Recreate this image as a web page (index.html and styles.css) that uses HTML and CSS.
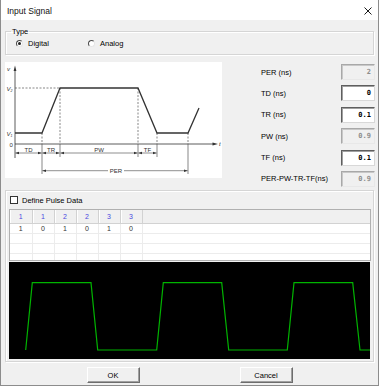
FILE: index.html
```html
<!DOCTYPE html>
<html lang="en">
  <head>
    <meta charset="UTF-8" />
    <meta name="viewport" content="width=device-width, initial-scale=1.0" />
    <title>Input Signal</title>
    <link rel="stylesheet" href="styles.css">
  </head>

  <body>
    <div class="window">
      <!-- Title bar -->
      <div class="titlebar">
        <span class="title">Input Signal</span>
        <svg class="close" width="8" height="8" viewBox="0 0 8 8">
          <path d="M0.5 0.5L7.5 7.5M7.5 0.5L0.5 7.5" stroke="#1a1a1a" stroke-width="1" />
        </svg>
      </div>

      <!-- Signal type -->
      <fieldset class="group type-group">
        <legend>Type</legend>
        <div class="radio-row">
          <label class="radio checked"><span class="radio-dot"></span>Digital</label>
          <label class="radio"><span class="radio-dot"></span>Analog</label>
        </div>
      </fieldset>

      <div class="middle">
        <!-- Pulse timing diagram -->
        <svg class="diagram" width="217" height="116" viewBox="0 0 217 116">
          <defs>
            <marker id="arr" viewBox="0 0 4 4" refX="4" refY="2" markerWidth="4" markerHeight="4" orient="auto-start-reverse" markerUnits="userSpaceOnUse">
              <path d="M0 0.6L4 2L0 3.4Z" fill="#333" />
            </marker>
          </defs>
          <rect width="217" height="116" fill="#fff" />

          <g stroke="#333" stroke-width="0.8" fill="none">
            <line x1="10" y1="7" x2="10" y2="96" />
            <line x1="10" y1="82" x2="208" y2="82" />
          </g>
          <polygon points="10,3.5 8.6,9 11.4,9" fill="#333" />
          <polygon points="213,82 207.5,80.6 207.5,83.4" fill="#333" />

          <g stroke="#555" stroke-width="0.7" stroke-dasharray="2 1.5" fill="none">
            <line x1="10" y1="26" x2="55" y2="26" />
            <line x1="37" y1="71" x2="37" y2="82" />
            <line x1="55" y1="26" x2="55" y2="82" />
            <line x1="133" y1="26" x2="133" y2="82" />
            <line x1="152" y1="71" x2="152" y2="82" />
            <line x1="183" y1="71" x2="183" y2="82" />
          </g>
          <g stroke="#555" stroke-width="0.7" fill="none">
            <line x1="37" y1="82" x2="37" y2="112" />
            <line x1="55" y1="82" x2="55" y2="95" />
            <line x1="133" y1="82" x2="133" y2="95" />
            <line x1="152" y1="82" x2="152" y2="95" />
            <line x1="183" y1="82" x2="183" y2="112" />
          </g>

          <polyline points="10,71 37,71 55,26 133,26 152,71 183,71 194,46" fill="none" stroke="#333" stroke-width="1.3" />

          <g stroke="#444" stroke-width="0.6" marker-start="url(#arr)" marker-end="url(#arr)">
            <line x1="10.4" y1="91" x2="36.6" y2="91" />
            <line x1="37.4" y1="91" x2="54.6" y2="91" />
            <line x1="55.4" y1="91" x2="132.6" y2="91" />
            <line x1="133.4" y1="91" x2="151.6" y2="91" />
            <line x1="37.4" y1="108.7" x2="182.6" y2="108.7" />
          </g>
          <rect x="103" y="105" width="16" height="7" fill="#fff" />

          <g class="dia-text" text-anchor="middle">
            <text x="23.5" y="89.5">TD</text>
            <text x="46" y="89.5">TR</text>
            <text x="94" y="89.5">PW</text>
            <text x="142.5" y="89.5">TF</text>
            <text x="111" y="111">PER</text>
          </g>
          <g class="dia-text">
            <text x="2" y="9" font-style="italic">v</text>
            <text x="1.5" y="28.5" font-style="italic">V<tspan font-size="3.5" dy="1">2</tspan></text>
            <text x="1.5" y="73.5" font-style="italic">V<tspan font-size="3.5" dy="1">1</tspan></text>
            <text x="4.5" y="84.5">0</text>
            <text x="214" y="84" font-style="italic">t</text>
          </g>
        </svg>

        <!-- Timing parameters -->
        <div class="params">
          <span class="param-label">PER (ns)</span><span class="field disabled">2</span>
          <span class="param-label">TD (ns)</span><span class="field">0</span>
          <span class="param-label">TR (ns)</span><span class="field">0.1</span>
          <span class="param-label">PW (ns)</span><span class="field disabled">0.9</span>
          <span class="param-label">TF (ns)</span><span class="field">0.1</span>
          <span class="param-label">PER-PW-TR-TF(ns)</span><span class="field disabled">0.9</span>
        </div>
      </div>

      <!-- Pulse data -->
      <div class="group pulse-group">
        <label class="check-row"><span class="checkbox"></span>Define Pulse Data</label>
        <div class="sheet-wrap">
          <table class="sheet">
            <colgroup>
              <col class="col" /><col class="col" /><col class="col" />
              <col class="col" /><col class="col" /><col class="col" />
              <col />
            </colgroup>
            <thead>
              <tr><th>1</th><th>1</th><th>2</th><th>2</th><th>3</th><th>3</th><th class="filler"></th></tr>
            </thead>
            <tbody>
              <tr><td>1</td><td>0</td><td>1</td><td>0</td><td>1</td><td>0</td><td class="filler"></td></tr>
              <tr><td></td><td></td><td></td><td></td><td></td><td></td><td class="filler"></td></tr>
              <tr><td></td><td></td><td></td><td></td><td></td><td></td><td class="filler"></td></tr>
              <tr><td></td><td></td><td></td><td></td><td></td><td></td><td class="filler"></td></tr>
            </tbody>
          </table>
        </div>
        <svg class="plot" width="361" height="97" viewBox="0 0 361 97">
          <polyline
            points="16.7,88 23.3,20.7 82,20.7 88.7,88 147.7,88 154.3,20.7 212.7,20.7 219.7,88 278.3,88 285,20.7 343.7,20.7 351,88 361,88"
            fill="none" stroke="#00b400" stroke-width="1.2" />
        </svg>
      </div>

      <div class="buttons">
        <button>OK</button>
        <button>Cancel</button>
      </div>
    </div>
  </body>
</html>
```

FILE: styles.css
```css
:root {
  --face: #f0f0f0;
  --group-line: #d5d5d5;
  --text: #000;
  --muted: #8d8d8d;
}

* {
  box-sizing: border-box;
  margin: 0;
  padding: 0;
}

body {
  font-family: "Liberation Sans", Arial, sans-serif;
  font-size: 7.5px;
  color: var(--text);
  background: #fff;
}

.window {
  width: 379px;
  height: 386px;
  background: var(--face);
  border: 1px solid #8c8c8c;
  border-top: 0;
  overflow: hidden;
}

.titlebar {
  height: 20px;
  background: #fff;
  display: flex;
  align-items: center;
  justify-content: space-between;
  padding: 2px 6px 0 6px;
}

.title {
  font-size: 8.5px;
  color: #111;
}

.close {
  display: block;
}

/* Group boxes */
.group {
  margin: 0 4px;
  border: 1px solid var(--group-line);
  box-shadow: inset 1px 1px 0 #fff, 1px 1px 0 #fff;
}

.type-group {
  margin-top: 7px;
  padding: 3px 4px 6px 5px;
}

.type-group legend {
  padding: 0 1px;
  line-height: 9px;
}

.radio-row {
  display: flex;
  line-height: 9px;
  padding-left: 5px;
}

.radio {
  display: inline-flex;
  align-items: center;
  gap: 5px;
  width: 72px;
}

.radio-dot {
  width: 7px;
  height: 7px;
  border-radius: 50%;
  border: 1px solid;
  border-color: #4a4a4a #e6e6e6 #e6e6e6 #4a4a4a;
  background: #fff;
  display: inline-flex;
  align-items: center;
  justify-content: center;
}

.radio.checked .radio-dot:before {
  content: "";
  width: 3px;
  height: 3px;
  border-radius: 50%;
  background: #222;
}

/* Diagram + parameters */
.middle {
  display: flex;
  margin: 7px 0 0 4px;
  height: 125px;
}

.diagram {
  display: block;
  flex: none;
}

.dia-text {
  font-family: "Liberation Sans", Arial, sans-serif;
  font-size: 6px;
  fill: #333;
}

.params {
  display: grid;
  grid-template-columns: 80px 34px;
  grid-auto-rows: 16px;
  row-gap: 5.4px;
  align-items: center;
  margin: 2px 0 0 39px;
}

.field {
  height: 16px;
  border: 1px solid;
  border-color: #5e5e5e #d8d8d8 #d8d8d8 #5e5e5e;
  box-shadow: inset 1px 1px 0 #a0a0a0;
  background: #fff;
  text-align: right;
  padding-right: 3px;
  font-family: "DejaVu Sans Mono", "Liberation Mono", monospace;
  font-weight: bold;
  font-size: 7px;
  line-height: 14px;
}

.field.disabled {
  background: var(--face);
  border-color: #a8a8a8 #e8e8e8 #e8e8e8 #a8a8a8;
  box-shadow: inset 1px 1px 0 #c8c8c8;
  color: var(--muted);
}

/* Pulse data */
.pulse-group {
  margin-top: 3px;
  padding: 0 2px 2px 3px;
}

.check-row {
  display: flex;
  align-items: center;
  gap: 4px;
  height: 18px;
  padding-left: 1px;
}

.checkbox {
  width: 8px;
  height: 8px;
  border: 1px solid #333;
  background: #fff;
}

.sheet-wrap {
  height: 52px;
  border: 1px solid #b0b0b0;
  background: #fff;
  overflow: hidden;
}

.sheet {
  width: 100%;
  table-layout: fixed;
  border-collapse: collapse;
  font-size: 7px;
}

.col {
  width: 22px;
}

.sheet th {
  height: 13px;
  padding: 0;
  background: var(--face);
  border-right: 1px solid #d2d2d2;
  border-bottom: 1px solid #d2d2d2;
  box-shadow: inset 1px 0 0 #fff;
  font-weight: normal;
  color: #4a4ae0;
}

.sheet td {
  height: 10px;
  padding: 0;
  border-right: 1px solid #ececec;
  border-bottom: 1px solid #ececec;
  text-align: center;
  color: #333;
  line-height: 9px;
}

.sheet .filler {
  border-right: 0;
  box-shadow: none;
}

.plot {
  display: block;
  margin-top: 1px;
  background: #000;
}

/* Dialog buttons */
.buttons {
  display: flex;
  justify-content: center;
  gap: 100px;
  margin-top: 5px;
}

button {
  width: 53px;
  height: 16px;
  background: var(--face);
  border: 1px solid;
  border-color: #fff #6d6d6d #6d6d6d #fff;
  box-shadow: inset -1px -1px 0 #a0a0a0;
  font-family: "Liberation Sans", Arial, sans-serif;
  font-size: 7.5px;
  color: #000;
}
```
